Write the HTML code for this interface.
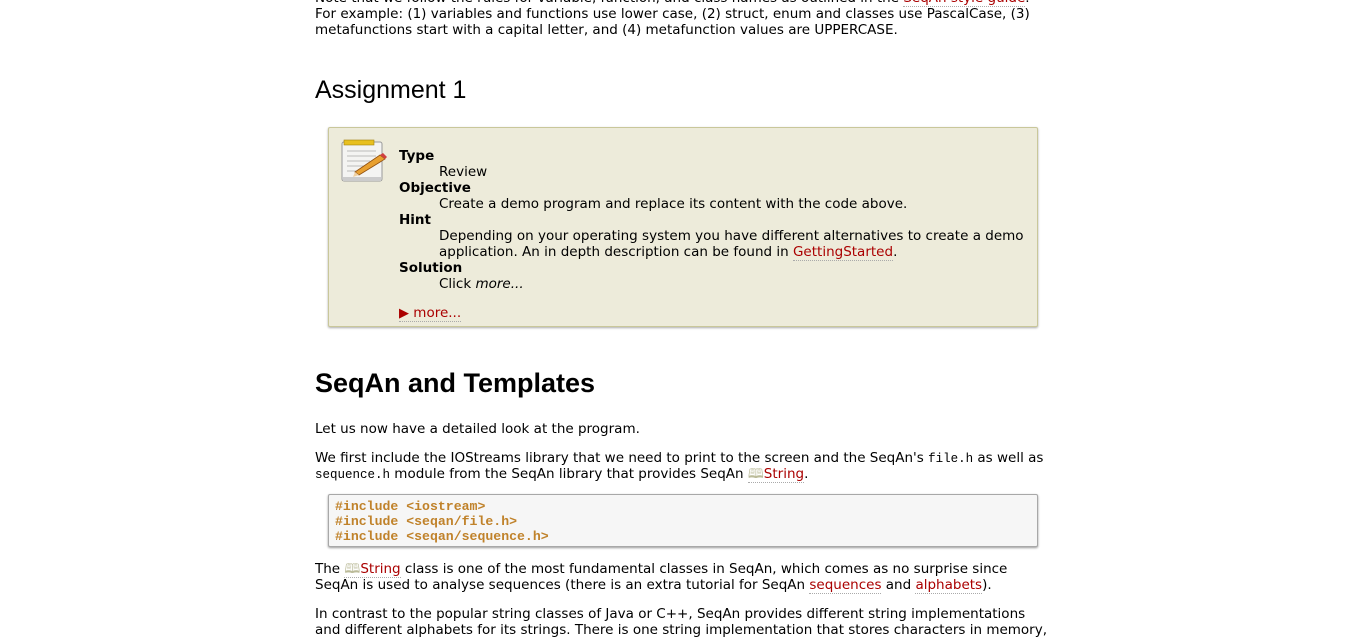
<!DOCTYPE html>
<html><head><meta charset="utf-8"><style>
body{margin:0;background:#fff;width:1349px;height:637px;overflow:hidden;position:relative;font-family:"DejaVu Sans","Liberation Sans",sans-serif;font-size:13.5px;color:#000}
.a{position:absolute;white-space:nowrap;line-height:16px;margin-top:1px}
a{color:#a00;text-decoration:none;border-bottom:1px dotted #aaa}
tt{font-family:"Liberation Mono",monospace;font-size:12.5px}
.h{font-family:"Liberation Sans",sans-serif}
b{font-weight:bold}
.box{position:absolute;left:328px;top:127px;width:708px;height:198px;background:#edebda;border:1px solid #c9c79a;border-radius:2px;box-shadow:0 1px 2px #aaa}
.code{position:absolute;left:328px;top:494px;width:708px;height:51px;background:#f6f6f6;border:1px solid #a8a8a8;border-radius:2px;box-shadow:0 1px 2px #999}
.c{position:absolute;left:335px;font-family:"Liberation Mono",monospace;font-weight:bold;font-size:13.2px;color:#c0822a;line-height:15px;white-space:pre}
</style></head><body>
<div class="a" style="left:315px;top:-11px">Note that we follow the rules for variable, function, and class names as outlined in the <a>SeqAn style guide</a>.</div>
<div class="a" style="left:315px;top:5px">For example: (1) variables and functions use lower case, (2) struct, enum and classes use PascalCase, (3)</div>
<div class="a" style="left:315px;top:21px">metafunctions start with a capital letter, and (4) metafunction values are UPPERCASE.</div>
<div class="a h" style="left:315px;top:74px;font-size:25px;line-height:30px">Assignment 1</div>
<div class="box"></div>
<svg style="position:absolute;left:340px;top:139px" width="48" height="45" viewBox="0 0 48 45">
<rect x="2" y="3" width="40" height="39" rx="2" fill="#f4f4f2" stroke="#999"/>
<rect x="3" y="38" width="38" height="4" fill="#ccc"/>
<rect x="4" y="1" width="30" height="5" fill="#e8c020" stroke="#a08010" stroke-width=".6"/>
<g stroke="#bbb"><line x1="7" y1="12" x2="36" y2="12"/><line x1="7" y1="17" x2="36" y2="17"/><line x1="7" y1="22" x2="30" y2="22"/><line x1="7" y1="27" x2="26" y2="27"/><line x1="7" y1="32" x2="22" y2="32"/></g>
<path d="M15 33 L40 16 L45 20 L19 36 Z" fill="#e8a030" stroke="#905010" stroke-width=".8"/>
<path d="M15 33 L13 38 L19 36 Z" fill="#f0d0a0"/>
<path d="M40 16 L43 14 L47 18 L45 20Z" fill="#d04040"/>
</svg>
<div class="a" style="left:399px;top:147px"><b>Type</b></div>
<div class="a" style="left:439px;top:163px">Review</div>
<div class="a" style="left:399px;top:179px"><b>Objective</b></div>
<div class="a" style="left:439px;top:195px">Create a demo program and replace its content with the code above.</div>
<div class="a" style="left:399px;top:211px"><b>Hint</b></div>
<div class="a" style="left:439px;top:227px">Depending on your operating system you have different alternatives to create a demo</div>
<div class="a" style="left:439px;top:243px">application. An in depth description can be found in <a>GettingStarted</a>.</div>
<div class="a" style="left:399px;top:259px"><b>Solution</b></div>
<div class="a" style="left:439px;top:275px">Click <i>more...</i></div>
<div class="a" style="left:399px;top:304px"><a><span style="font-size:13px">&#9654;</span> more...</a></div>
<div class="a h" style="left:315px;top:366px;font-size:27px;line-height:32px;font-weight:bold">SeqAn and Templates</div>
<div class="a" style="left:315px;top:420px">Let us now have a detailed look at the program.</div>
<div class="a" style="left:315px;top:449px">We first include the IOStreams library that we need to print to the screen and the SeqAn's <tt>file.h</tt> as well as</div>
<div class="a" style="left:315px;top:465px"><tt>sequence.h</tt> module from the SeqAn library that provides SeqAn <a><span style="color:#bb9">&#128366;</span>String</a>.</div>
<div class="code"></div>
<div class="c" style="top:499px">#include &lt;iostream&gt;
#include &lt;seqan/file.h&gt;
#include &lt;seqan/sequence.h&gt;</div>
<div class="a" style="left:315px;top:560px">The <a><span style="color:#bb9">&#128366;</span>String</a> class is one of the most fundamental classes in SeqAn, which comes as no surprise since</div>
<div class="a" style="left:315px;top:576px">SeqAn is used to analyse sequences (there is an extra tutorial for SeqAn <a>sequences</a> and <a>alphabets</a>).</div>
<div class="a" style="left:315px;top:605px">In contrast to the popular string classes of Java or C++, SeqAn provides different string implementations</div>
<div class="a" style="left:315px;top:621px">and different alphabets for its strings. There is one string implementation that stores characters in memory,</div>
</body></html>
